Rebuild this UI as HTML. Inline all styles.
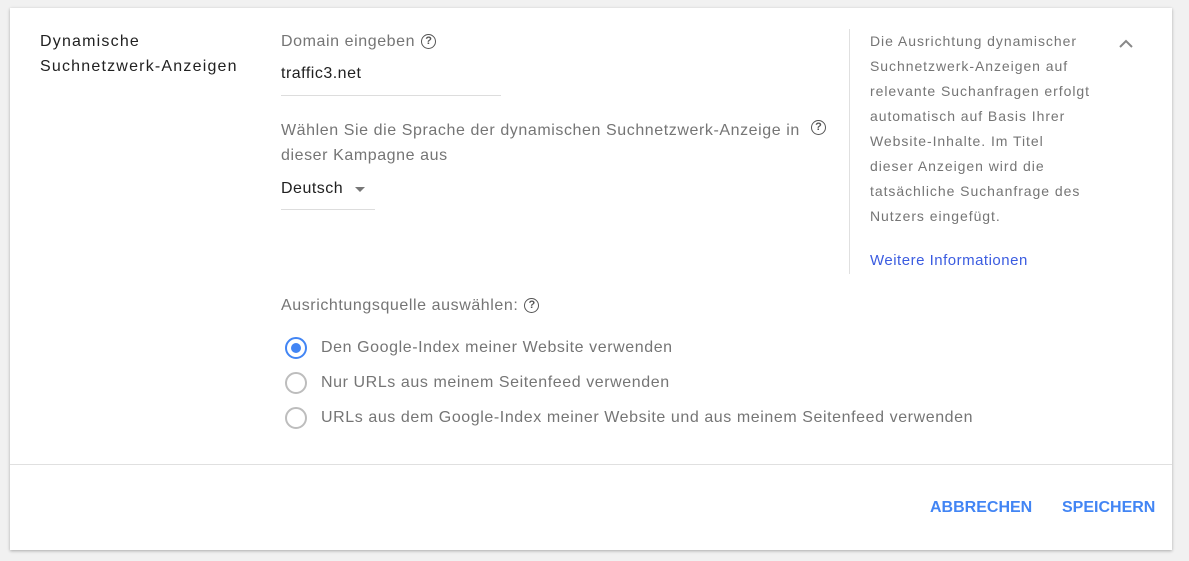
<!DOCTYPE html>
<html><head><meta charset="utf-8"><style>
body{margin:0;width:1189px;height:561px;background:#f1f1f1;font-family:"Liberation Sans",Arial,sans-serif;position:relative;overflow:hidden}
.card{position:absolute;left:10px;top:8px;width:1162px;height:542px;background:#fff;box-shadow:0 1px 3px rgba(0,0,0,.3)}
.a{position:absolute;white-space:nowrap}
.g{color:#757575;font-size:16px;letter-spacing:0.58px}
.d{color:#212121;font-size:16px;letter-spacing:0.5px}
.q{display:inline-block;width:13px;height:13px;border:1.6px solid #555;border-radius:50%;font-size:11px;line-height:13px;text-align:center;color:#555;font-weight:bold;vertical-align:2px;margin-left:6px;letter-spacing:0}
.r{position:absolute;width:22px;height:22px;border:2px solid #bdbdbd;border-radius:50%;box-sizing:border-box}
.side{color:#757575;font-size:14px;line-height:25px;letter-spacing:0.95px}
.btn{color:#4285f4;font-size:16px;font-weight:bold;position:absolute}
</style></head><body>
<div class="card">
<div class="a d" style="left:30px;top:21px;line-height:25px;white-space:normal;width:240px;letter-spacing:1.2px">Dynamische<br>Suchnetzwerk-Anzeigen</div>
<div class="a g" style="left:271px;top:25px">Domain eingeben<span class="q">?</span></div>
<div class="a d" style="left:271px;top:57px">traffic3.net</div>
<div class="a" style="left:271px;top:87px;width:220px;height:1px;background:#ddd"></div>
<div class="a g" style="left:271px;top:110px;line-height:25px">Wählen Sie die Sprache der dynamischen Suchnetzwerk-Anzeige in<br>dieser Kampagne aus</div>
<span class="q a" style="left:795px;top:112px">?</span>
<div class="a d" style="left:271px;top:172px">Deutsch</div>
<div class="a" style="left:345px;top:179px;border-left:5px solid transparent;border-right:5px solid transparent;border-top:5px solid #777"></div>
<div class="a" style="left:271px;top:201px;width:94px;height:1px;background:#ddd"></div>
<div class="a" style="left:839px;top:21px;width:1px;height:245px;background:#e0e0e0"></div>
<div class="a side" style="left:860px;top:21px">Die Ausrichtung dynamischer<br>Suchnetzwerk-Anzeigen auf<br>relevante Suchanfragen erfolgt<br>automatisch auf Basis Ihrer<br>Website-Inhalte. Im Titel<br>dieser Anzeigen wird die<br>tatsächliche Suchanfrage des<br>Nutzers eingefügt.</div>
<div class="a" style="left:860px;top:244px;font-size:15px;color:#3b5ce0;letter-spacing:0.5px">Weitere Informationen</div>
<svg class="a" style="left:1108px;top:30px" width="16" height="12"><path d="M2 9 L8 3 L14 9" fill="none" stroke="#888" stroke-width="2"/></svg>
<div class="a g" style="left:271px;top:289px">Ausrichtungsquelle auswählen:<span class="q">?</span></div>
<div class="r" style="left:275px;top:329px;border-color:#4285f4"><div style="position:absolute;left:4px;top:4px;width:10px;height:10px;border-radius:50%;background:#4285f4"></div></div>
<div class="a g" style="left:311px;top:331px">Den Google-Index meiner Website verwenden</div>
<div class="r" style="left:275px;top:364px"></div>
<div class="a g" style="left:311px;top:366px">Nur URLs aus meinem Seitenfeed verwenden</div>
<div class="r" style="left:275px;top:399px"></div>
<div class="a g" style="left:311px;top:401px">URLs aus dem Google-Index meiner Website und aus meinem Seitenfeed verwenden</div>
<div class="a" style="left:0;top:456px;width:1162px;height:1px;background:#e0e0e0"></div>
<div class="btn" style="left:920px;top:491px">ABBRECHEN</div>
<div class="btn" style="left:1052px;top:491px">SPEICHERN</div>
</div>
</body></html>
